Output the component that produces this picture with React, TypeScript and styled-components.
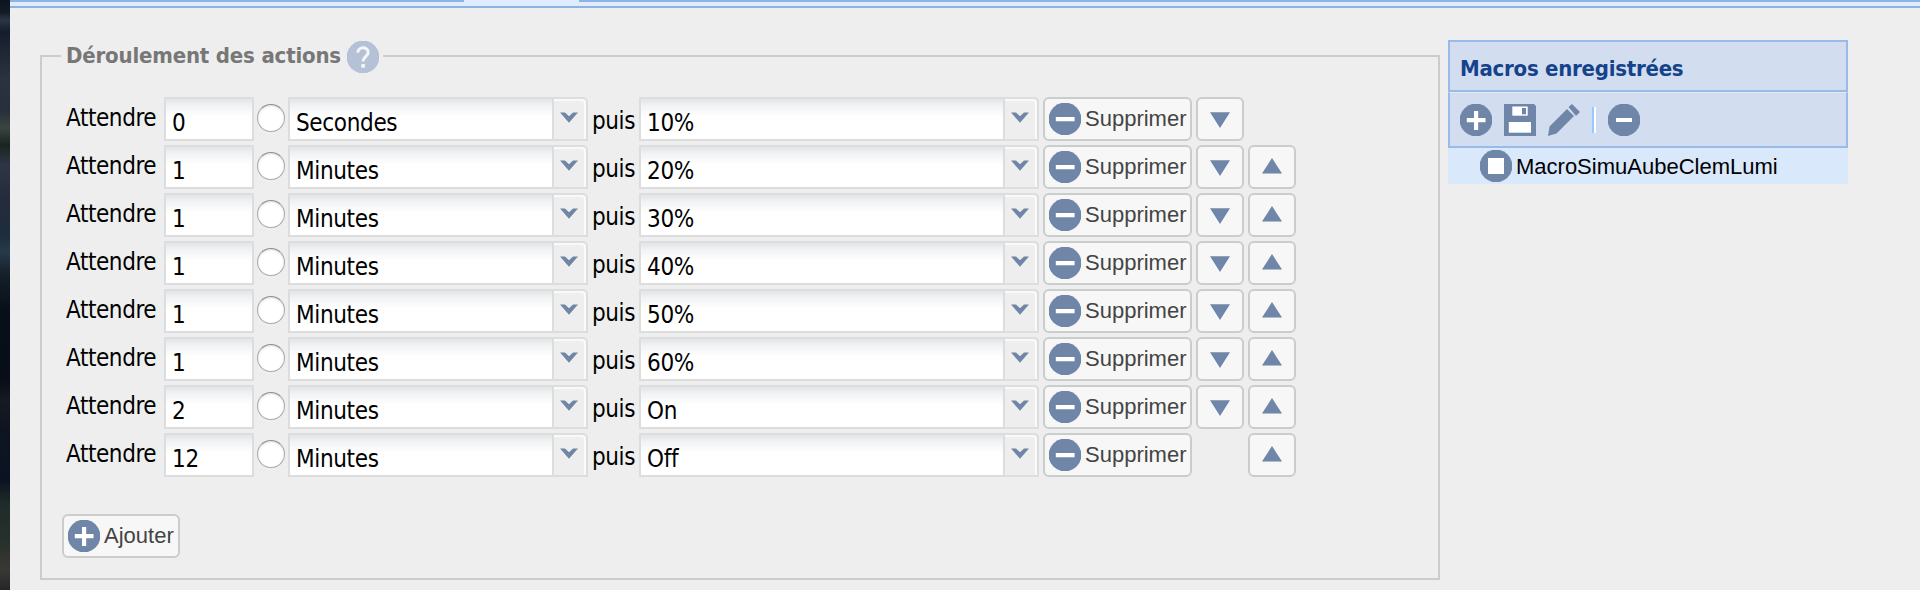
import React, { ReactNode } from "react";
import styled, { createGlobalStyle, css } from "styled-components";

const Global = createGlobalStyle`
  * { box-sizing: border-box; }
  body { margin: 0; background: #eee; overflow: hidden; }
`;

const ui = css`
  font-family: "DejaVu Sans Condensed", "DejaVu Sans", sans-serif;
  font-stretch: condensed;
`;

const Page = styled.div`
  display: flex;
  height: 590px;
  width: 1920px;
  background: #eee;
`;
const Wallpaper = styled.div`
  width: 10px;
  flex: none;
  background: linear-gradient(
    180deg, #0c1420 0, #121a26 12px, #2b3644 20px, #151c2c 32px, #1c2433 45px, #2b3341 80px, #262f3b 110px, #3c4340 128px, #18251f 145px,
    #303546 165px, #262b3c 200px, #1c2d3d 235px, #263a4b 252px, #141f29 275px, #090f19 310px,
    #080e18 380px, #171a20 400px, #0f1422 430px, #0b1322 480px, #202c2a 505px, #26302b 540px, #3a3834 570px, #262626 590px
  );
`;
const Main = styled.main`
  flex: 1;
  display: flex;
  flex-direction: column;
`;
const TabStrip = styled.div`
  height: 8px;
  flex: none;
  display: flex;
  background: #dfecfb;
  border-bottom: 2px solid #8db2e3;
`;
const TabEdge = styled.div<{ $w?: number }>`
  height: 2px;
  background: #8db2e3;
  ${(p) => (p.$w ? `width: ${p.$w}px;` : "flex: 1;")}
`;
const ActiveTab = styled.div`
  width: 115px;
`;
const Content = styled.div`
  display: flex;
  align-items: flex-start;
  padding: 32px 0 0 30px;
  gap: 8px;
`;
const Fieldset = styled.section`
  width: 1400px;
  height: 525px;
  margin-top: 15px;
  border: 2px solid #ccc;
  padding-left: 20px;
`;
const Legend = styled.h2`
  ${ui}
  display: flex;
  align-items: center;
  width: 322px;
  height: 32px;
  margin: -16px 0 0 -1px;
  padding-left: 5px;
  gap: 7px;
  background: #eee;
  color: #777;
  font-size: 22px;
  font-weight: bold;
  white-space: nowrap;
`;
const LegendText = styled.span`
  width: 274px;
  padding-bottom: 2px;
  line-height: 28px;
  letter-spacing: -0.18px;
`;
const Rows = styled.div`
  display: flex;
  flex-direction: column;
  gap: 4px;
  margin-top: 24px;
  padding-left: 4px;
`;
const Row = styled.div`
  display: flex;
  height: 44px;
`;
const Label = styled.span<{ $w: number; $top: number; $left?: number }>`
  ${ui}
  width: ${(p) => p.$w}px;
  padding: ${(p) => p.$top}px 0 0 ${(p) => p.$left ?? 0}px;
  font-size: 24px;
  line-height: 28px;
  letter-spacing: -0.42px;
  white-space: nowrap;
`;
const Field = styled.div<{ $w: number }>`
  ${ui}
  width: ${(p) => p.$w}px;
  height: 44px;
  border: 2px solid #ddd;
  background: linear-gradient(180deg, #e2e6e8 0, #f1f3f4 7px, #fff 18px);
  padding: 10px 0 0 6px;
  font-size: 24px;
  line-height: 28px;
  letter-spacing: -0.35px;
  color: #000;
`;
const Select = styled.div`
  display: flex;
`;
const Trigger = styled.div`
  width: 34px;
  height: 44px;
  border: 2px solid #ddd;
  border-left: 0;
  border-top-right-radius: 5px;
  background: #eee;
  box-shadow: inset -2px 2px 0 #fafafa;
  display: flex;
  justify-content: center;
  padding: 13px 2px 0 0;
`;
const Radio = styled.span`
  width: 28px;
  height: 28px;
  margin: 7px 3px 0;
  border-radius: 50%;
  border: 1px solid #aaa;
  border-top-color: #8c8c8c;
  background: #fff;
  box-shadow: inset 0 1px 2px rgba(0, 0, 0, 0.15);
`;
const Button = styled.button<{ $w: number }>`
  width: ${(p) => p.$w}px;
  height: 44px;
  flex: none;
  display: flex;
  align-items: center;
  gap: 4px;
  margin: 0;
  padding: 0 0 0 4px;
  border: 2px solid #ccc;
  border-radius: 6px;
  background: #f7f7f7;
  font: 22px/26px "Liberation Sans", Arial, sans-serif;
  color: #444;
`;
const ArrowButton = styled(Button)`
  padding: 0;
  justify-content: center;
`;
const Actions = styled.div`
  display: flex;
  gap: 4px;
  margin-left: 4px;
`;
const Spacer = styled.div`
  width: 48px;
`;
const Footer = styled.div`
  margin-top: 37px;
`;
const Panel = styled.aside`
  width: 400px;
`;
const PanelHeader = styled.h3`
  ${ui}
  height: 52px;
  margin: 0;
  padding: 13px 0 0 10px;
  border: 2px solid #99bbe8;
  background: #d2deef;
  color: #15428b;
  font-size: 22px;
  line-height: 28px;
  letter-spacing: -0.25px;
`;
const Toolbar = styled.div`
  height: 56px;
  display: flex;
  align-items: center;
  gap: 12px;
  padding: 0 0 0 10px;
  border: 2px solid #99bbe8;
  border-top: 1px solid #dde8f5;
  background: #d2deef;
`;
const Separator = styled.span`
  width: 4px;
  height: 26px;
  border-left: 2px solid #98c8ff;
  border-right: 2px solid #fff;
`;
const MacroItem = styled.div`
  height: 36px;
  display: flex;
  align-items: center;
  gap: 4px;
  padding-left: 32px;
  background: #d9e8fb;
  font: 22px/26px "Liberation Sans", Arial, sans-serif;
  color: #000;
`;
const MacroName = styled.span`
  padding-top: 2px;
`;
const Glyph = styled.svg`
  display: block;
  flex: none;
`;

const BLUE = "#6f86a8";

const Disc = ({ children, fill = BLUE }: { children: ReactNode; fill?: string }) => (
  <Glyph width="32" height="32" viewBox="0 0 32 32">
    <circle cx="16" cy="16" r="16.4" fill={fill} />
    {children}
  </Glyph>
);
const Minus = ({ thin }: { thin?: boolean }) => (
  <Disc>
    {thin ? (
      <rect x="8" y="14" width="16" height="4" fill="#fff" />
    ) : (
      <rect x="6.8" y="14" width="18.8" height="4.2" rx="0.5" fill="#fff" />
    )}
  </Disc>
);
const Plus = () => (
  <Disc>
    <path d="M14 7h4.200v7H25.500v4.200h-7.300V26H14v-7.800H6.800V14h7.200z" fill="#fff" />
  </Disc>
);
const Help = () => (
  <Disc fill="#b4c1d6">
    <path
      d="M10.800 11.800C10.800 5.300 21.200 5.300 21.200 11.300c0 4-5.200 4.200-5.200 9.200"
      fill="none"
      stroke="#f4f6f9"
      strokeWidth="3"
    />
    <rect x="14.200" y="23" width="3.800" height="3.800" rx="1" fill="#f4f6f9" />
  </Disc>
);
const Save = () => (
  <Glyph width="32" height="32" viewBox="0 0 32 32">
    <path d="M0 0h30l2 2v30H0z" fill={BLUE} />
    <rect x="8.300" y="2.500" width="15.400" height="9.200" fill="#fff" />
    <rect x="18" y="4" width="4" height="6.300" fill={BLUE} />
    <rect x="4.800" y="18" width="22.200" height="10.700" fill="#fff" />
  </Glyph>
);
const Pencil = () => (
  <Glyph width="32" height="32" viewBox="0 0 32 32">
    <path d="M0 32l1.500-9.500L19 5l7 7L8.500 29.500z M20.500 3l3.500-3 8 8-4 4z" fill={BLUE} />
  </Glyph>
);
const Stop = () => (
  <Disc>
    <rect x="8" y="8" width="16" height="16" fill="#fff" />
  </Disc>
);
const Chevron = () => (
  <Glyph width="18" height="12" viewBox="0 0 18 12">
    <path d="M0 0.500h5L9 4.300 13 0.500H18L9 10.800z" fill={BLUE} />
  </Glyph>
);
const Triangle = ({ up }: { up?: boolean }) => (
  <Glyph width="20" height="18" viewBox="0 0 20 18">
    <path d={up ? "M10 0l10 15.500H0z" : "M0 2.300h20L10 18z"} fill={BLUE} />
  </Glyph>
);

const Combo = ({ width, value }: { width: number; value: string }) => (
  <Select>
    <Field $w={width}>{value}</Field>
    <Trigger>
      <Chevron />
    </Trigger>
  </Select>
);

const steps = [
  ["0", "Secondes", "10%"],
  ["1", "Minutes", "20%"],
  ["1", "Minutes", "30%"],
  ["1", "Minutes", "40%"],
  ["1", "Minutes", "50%"],
  ["1", "Minutes", "60%"],
  ["2", "Minutes", "On"],
  ["12", "Minutes", "Off"],
];

export default function App() {
  return (
    <Page>
      <Global />
      <Wallpaper />
      <Main>
        <TabStrip>
          <TabEdge $w={454} />
          <ActiveTab />
          <TabEdge />
        </TabStrip>
        <Content>
          <Fieldset>
            <Legend>
              <LegendText>Déroulement des actions</LegendText>
              <Help />
            </Legend>
            <Rows>
              {steps.map(([delay, unit, target], i) => (
                <Row key={i}>
                  <Label $w={98} $top={7}>Attendre</Label>
                  <Field $w={90}>{delay}</Field>
                  <Radio />
                  <Combo width={266} value={unit} />
                  <Label $w={51} $top={10} $left={4}>puis</Label>
                  <Combo width={366} value={target} />
                  <Actions>
                    <Button $w={149}>
                      <Minus />
                      Supprimer
                    </Button>
                    {i < steps.length - 1 ? (
                      <ArrowButton $w={48}>
                        <Triangle />
                      </ArrowButton>
                    ) : (
                      <Spacer />
                    )}
                    {i > 0 && (
                      <ArrowButton $w={48}>
                        <Triangle up />
                      </ArrowButton>
                    )}
                  </Actions>
                </Row>
              ))}
            </Rows>
            <Footer>
              <Button $w={118}>
                <Plus />
                Ajouter
              </Button>
            </Footer>
          </Fieldset>
          <Panel>
            <PanelHeader>Macros enregistrées</PanelHeader>
            <Toolbar>
              <Plus />
              <Save />
              <Pencil />
              <Separator />
              <Minus thin />
            </Toolbar>
            <MacroItem>
              <Stop />
              <MacroName>MacroSimuAubeClemLumi</MacroName>
            </MacroItem>
          </Panel>
        </Content>
      </Main>
    </Page>
  );
}
